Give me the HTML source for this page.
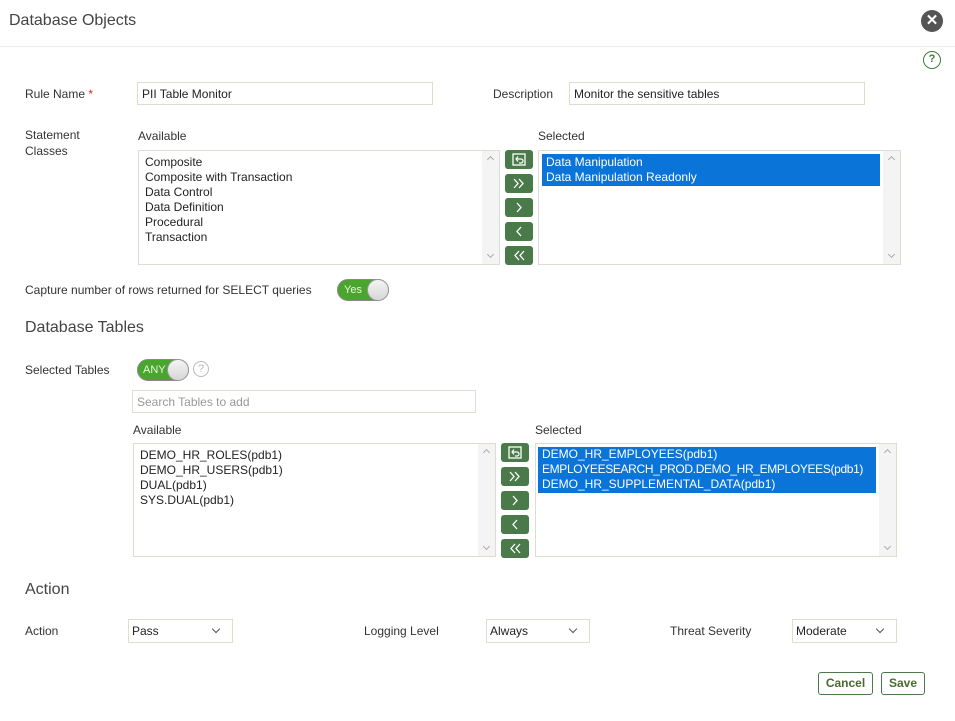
<!DOCTYPE html>
<html><head><meta charset="utf-8"><style>
*{box-sizing:border-box;margin:0;padding:0}
body{width:955px;height:721px;background:#fff;font-family:"Liberation Sans",sans-serif;font-size:12px;color:#333;position:relative;overflow:hidden}
.a{position:absolute;white-space:nowrap}
.lbl{font-size:12px;color:#333}
.inp{position:absolute;border:1px solid #e0ddd0;background:#fff;font-size:12px;color:#222;padding:0 4px;display:flex;align-items:center}
.list{position:absolute;border:1px solid #e0ddd0;background:#fff;font-size:12px;color:#222}
.list .it{height:15px;line-height:15px;padding-left:6px;white-space:nowrap}
.list .sel{background:#0a74d8;color:#fff}
.sb{position:absolute;right:0;top:0;bottom:0;width:17px;background:#f4f4f4}
.sb:before{content:"";position:absolute;left:6px;top:6px;width:4px;height:4px;border-left:1px solid #aaa;border-top:1px solid #aaa;transform:rotate(45deg)}
.sb:after{content:"";position:absolute;left:6px;bottom:7px;width:4px;height:4px;border-right:1px solid #aaa;border-bottom:1px solid #aaa;transform:rotate(45deg)}
.btn{position:absolute;width:28px;height:19px;background:#4a7a4a;border-radius:3px;color:#fff;text-align:center;line-height:18px;font-size:14px}
.btn svg{position:absolute;left:7px;top:3px}
.tog{position:absolute;width:52px;height:22px;border-radius:11px;background:#4aa52e;border:1px solid #888;color:#e8f5e0;font-size:11px;line-height:20px;padding-left:6px}
.tog:after{content:"";position:absolute;right:-1px;top:-1px;width:22px;height:22px;border-radius:50%;background:linear-gradient(#f4f4f4,#d6d6d6);border:1px solid #999;box-sizing:border-box}
.h{font-size:16px;color:#444}
.selc{position:absolute;border:1px solid #e0ddd0;background:#fff;font-size:12px;color:#222;padding-left:3px;line-height:22px}
.selc:after{content:"";position:absolute;right:13px;top:6px;width:5px;height:5px;border-right:1px solid #555;border-bottom:1px solid #555;transform:rotate(45deg)}
.gb{position:absolute;border:1px solid #4a7a4a;border-radius:3px;color:#4a6a30;font-weight:bold;font-size:12px;text-align:center;line-height:21px;background:#fff}
</style></head><body>
<div class="a" style="left:9px;top:12px;font-size:16px;color:#444">Database Objects</div>
<div class="a" style="left:921px;top:10px;width:22px;height:22px;border-radius:50%;background:#555;color:#fff;text-align:center;line-height:21px;font-size:15px;font-weight:bold">✕</div>
<div class="a" style="left:0;top:46px;width:955px;height:1px;background:#ececec"></div>
<div class="a" style="left:923px;top:51px;width:18px;height:18px;border-radius:50%;border:1.5px solid #3c7a3c;color:#3c7a3c;text-align:center;line-height:15px;font-size:11px;font-weight:bold">?</div>

<div class="a lbl" style="left:25px;top:87px">Rule Name <span style="color:#d22">*</span></div>
<div class="inp" style="left:137px;top:82px;width:296px;height:23px">PII Table Monitor</div>
<div class="a lbl" style="left:493px;top:87px">Description</div>
<div class="inp" style="left:569px;top:82px;width:296px;height:23px">Monitor the sensitive tables</div>

<div class="a lbl" style="left:25px;top:127px;line-height:16px">Statement<br>Classes</div>
<div class="a lbl" style="left:138px;top:129px">Available</div>
<div class="list" style="left:138px;top:150px;width:362px;height:115px;padding-top:4px">
<div class="it">Composite</div><div class="it">Composite with Transaction</div><div class="it">Data Control</div><div class="it">Data Definition</div><div class="it">Procedural</div><div class="it">Transaction</div><div class="sb"></div></div>
<div class="a lbl" style="left:538px;top:129px">Selected</div>
<div class="list" style="left:538px;top:150px;width:363px;height:115px;padding:3px 20px 0 3px">
<div class="it sel" style="padding-left:4px;padding-top:1px;height:16px">Data Manipulation</div><div class="it sel" style="padding-left:4px;height:16px">Data Manipulation Readonly</div><div class="sb"></div></div>

<div class="btn" style="left:505px;top:150px"><svg width="14" height="13" viewBox="0 0 14 13"><rect x="1" y="1" width="12" height="11" fill="none" stroke="#fff" stroke-width="1.3"/><path d="M6 3.5L4 6l2 2.5M4 6h5a2 2 0 0 1 0 4H7" fill="none" stroke="#fff" stroke-width="1.2"/></svg></div>
<div class="btn" style="left:505px;top:174px"><svg width="14" height="13" viewBox="0 0 14 13"><path d="M2 2l4 4.5-4 4.5M7 2l4 4.5-4 4.5" fill="none" stroke="#fff" stroke-width="1.3"/></svg></div>
<div class="btn" style="left:505px;top:198px"><svg width="14" height="13" viewBox="0 0 14 13"><path d="M5 2l4 4.5-4 4.5" fill="none" stroke="#fff" stroke-width="1.3"/></svg></div>
<div class="btn" style="left:505px;top:222px"><svg width="14" height="13" viewBox="0 0 14 13"><path d="M9 2L5 6.5 9 11" fill="none" stroke="#fff" stroke-width="1.3"/></svg></div>
<div class="btn" style="left:505px;top:246px"><svg width="14" height="13" viewBox="0 0 14 13"><path d="M7 2L3 6.5 7 11M12 2L8 6.5 12 11" fill="none" stroke="#fff" stroke-width="1.3"/></svg></div>

<div class="a lbl" style="left:25px;top:283px">Capture number of rows returned for SELECT queries</div>
<div class="tog" style="left:337px;top:279px">Yes</div>

<div class="a h" style="left:25px;top:319px">Database Tables</div>
<div class="a lbl" style="left:25px;top:363px">Selected Tables</div>
<div class="tog" style="left:137px;top:359px;padding-left:5px">ANY</div>
<div class="a" style="left:193px;top:361px;width:16px;height:16px;border-radius:50%;border:1px solid #bbb;color:#bbb;text-align:center;line-height:14px;font-size:11px">?</div>
<div class="inp" style="left:132px;top:390px;width:344px;height:23px;color:#999">Search Tables to add</div>

<div class="a lbl" style="left:133px;top:423px">Available</div>
<div class="list" style="left:133px;top:443px;width:363px;height:114px;padding-top:4px">
<div class="it">DEMO_HR_ROLES(pdb1)</div><div class="it">DEMO_HR_USERS(pdb1)</div><div class="it">DUAL(pdb1)</div><div class="it">SYS.DUAL(pdb1)</div><div class="sb"></div></div>
<div class="a lbl" style="left:535px;top:423px">Selected</div>
<div class="list" style="left:535px;top:443px;width:362px;height:114px;padding:3px 20px 0 2px">
<div class="it sel" style="padding-left:4px">DEMO_HR_EMPLOYEES(pdb1)</div><div class="it sel" style="padding-left:4px;letter-spacing:-0.35px">EMPLOYEESEARCH_PROD.DEMO_HR_EMPLOYEES(pdb1)</div><div class="it sel" style="padding-left:4px;height:16px">DEMO_HR_SUPPLEMENTAL_DATA(pdb1)</div><div class="sb"></div></div>

<div class="btn" style="left:501px;top:443px"><svg width="14" height="13" viewBox="0 0 14 13"><rect x="1" y="1" width="12" height="11" fill="none" stroke="#fff" stroke-width="1.3"/><path d="M6 3.5L4 6l2 2.5M4 6h5a2 2 0 0 1 0 4H7" fill="none" stroke="#fff" stroke-width="1.2"/></svg></div>
<div class="btn" style="left:501px;top:467px"><svg width="14" height="13" viewBox="0 0 14 13"><path d="M2 2l4 4.5-4 4.5M7 2l4 4.5-4 4.5" fill="none" stroke="#fff" stroke-width="1.3"/></svg></div>
<div class="btn" style="left:501px;top:491px"><svg width="14" height="13" viewBox="0 0 14 13"><path d="M5 2l4 4.5-4 4.5" fill="none" stroke="#fff" stroke-width="1.3"/></svg></div>
<div class="btn" style="left:501px;top:515px"><svg width="14" height="13" viewBox="0 0 14 13"><path d="M9 2L5 6.5 9 11" fill="none" stroke="#fff" stroke-width="1.3"/></svg></div>
<div class="btn" style="left:501px;top:539px"><svg width="14" height="13" viewBox="0 0 14 13"><path d="M7 2L3 6.5 7 11M12 2L8 6.5 12 11" fill="none" stroke="#fff" stroke-width="1.3"/></svg></div>

<div class="a h" style="left:25px;top:581px">Action</div>
<div class="a lbl" style="left:25px;top:624px">Action</div>
<div class="selc" style="left:128px;top:619px;width:105px;height:24px">Pass</div>
<div class="a lbl" style="left:364px;top:624px">Logging Level</div>
<div class="selc" style="left:486px;top:619px;width:104px;height:24px">Always</div>
<div class="a lbl" style="left:670px;top:624px">Threat Severity</div>
<div class="selc" style="left:792px;top:619px;width:105px;height:24px">Moderate</div>

<div class="gb" style="left:818px;top:672px;width:55px;height:23px">Cancel</div>
<div class="gb" style="left:881px;top:672px;width:44px;height:23px">Save</div>
</body></html>
